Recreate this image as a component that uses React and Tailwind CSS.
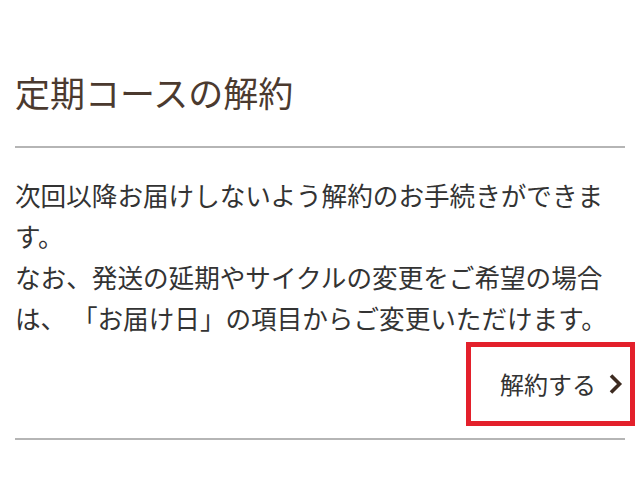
import React from 'react';

const jp = { fontFamily: '"Noto Sans CJK JP", "Noto Sans", sans-serif' };

export default function App() {
  return (
    <div className="w-full h-[491px] bg-white pl-[15px] pr-[10px] pt-[68px] overflow-hidden [text-spacing-trim:space-all]" style={jp}>
      <h2 className="text-[35px] leading-[48px] text-[#4b3a2f]">定期コースの解約</h2>
      <div className="mt-[30px] h-[2px] bg-[#b5b5b5]" />

      <p className="mt-[26px] text-[25.6px] leading-[41px] text-[#333333]">
        次回以降お届けしないよう解約のお手続きができます。
        <br />
        なお、発送の延期やサイクルの変更をご希望の場合は、 「お届け日」の項目からご変更いただけます。
      </p>

      <div className="flex justify-end -mr-[10px] mt-[4px]">
        <button className="w-[169px] h-[84px] border-[5px] border-[#e3202b] flex items-center justify-end gap-[12px] pr-[7px] text-[24px] text-[#333333]">
          <span>解約する</span>
          <svg width="15" height="22" viewBox="0 0 15 22" fill="none">
            <path d="M3 2.5 L11.5 11 L3 19.5" stroke="#3d2b20" strokeWidth="3.6" />
          </svg>
        </button>
      </div>

      <div className="mt-[12px] h-[2px] bg-[#b5b5b5]" />
    </div>
  );
}
